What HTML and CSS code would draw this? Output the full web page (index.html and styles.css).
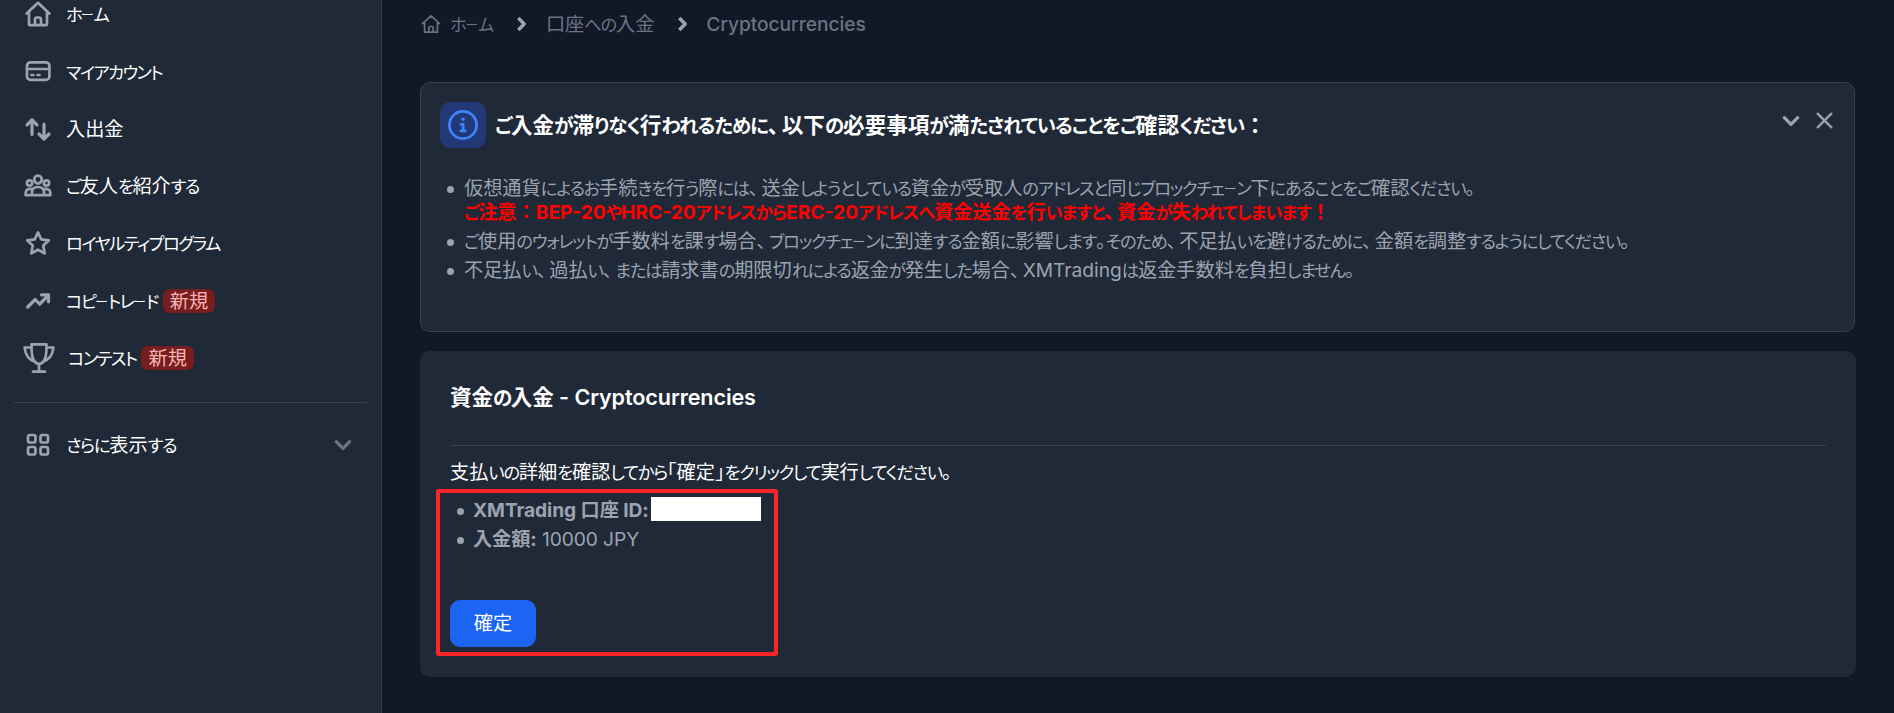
FILE: index.html
```html
<!DOCTYPE html>
<html lang="ja">
<head>
    <meta charset="UTF-8">
    <meta name="viewport" content="width=device-width, initial-scale=1.0">
    <title>資金の入金 - Cryptocurrencies</title>
    <link rel="stylesheet" href="styles.css">
</head>
<body>

<aside class="sidebar">
    <ul class="menu">
        <li class="menu-item">
            <svg class="icon" viewBox="0 0 28 28"><path d="M2.6 13.6 14 2.8l11.4 10.8M5 12v12.2q0 1 1 1h16q1 0 1-1V12M11 25v-5.500q0-2 2-2h2q2 0 2 2V25"/></svg>
            <span class="texto">ホーム</span>
        </li>
        <li class="menu-item">
            <svg class="icon" viewBox="0 0 28 28"><rect x="3" y="5.300" width="22.400" height="17.600" rx="3.500"/><path d="M3 12h22.400M7.500 18h2M13.500 18h2"/></svg>
            <span class="texto">マイアカウント</span>
        </li>
        <li class="menu-item">
            <svg class="icon" viewBox="0 0 28 28"><path class="thick" d="M8 19.500V5M3 9.800l5-5 5 5M20 9v14.500M15 19l5 5 5-5"/></svg>
            <span class="texto">入出金</span>
        </li>
        <li class="menu-item">
            <svg class="icon" viewBox="0 0 28 28"><circle cx="14" cy="7.500" r="3.800"/><circle cx="5.500" cy="11" r="2.600"/><circle cx="22.500" cy="11" r="2.600"/><path d="M8 23.200v-2.700q0-5.500 6-5.500t6 5.500v2.700M8 17q-6.300-.6-6.300 4v2.200h24.600V21q0-4.600-6.300-4"/></svg>
            <span class="texto">ご友人を紹介する</span>
        </li>
        <li class="menu-item">
            <svg class="icon" viewBox="0 0 28 28"><path d="m14 3.400 3.200 6.900 7.700 1-5.600 5.300 1.400 7.800-6.700-3.700-6.700 3.700 1.400-7.800-5.600-5.300 7.700-1z"/></svg>
            <span class="texto">ロイヤルティプログラム</span>
        </li>
        <li class="menu-item">
            <svg class="icon" viewBox="0 0 28 28"><path class="thick" d="m3.700 20 7.500-7.500 4.500 4.700 8-8.400M17.500 7.800h7v7"/></svg>
            <span class="texto">コピートレード</span>
            <span class="badge">新規</span>
        </li>
        <li class="menu-item menu-item-contest">
            <svg class="icon icon-cup" viewBox="0 0 32 32"><path d="M8.500 2.300h15q.5 19.500-7.500 19.500T8.500 2.300zM8.700 5.500H1.600q1 11.500 11 14.500M23.300 5.500h7.100q-1 11.500-11 14.500M16 22v7M10 29.700h12"/></svg>
            <span class="texto">コンテスト</span>
            <span class="badge">新規</span>
        </li>
    </ul>
    <div class="menu-more">
        <svg class="icon" viewBox="0 0 28 28"><rect x="4" y="4" width="7.500" height="7.500" rx="2"/><rect x="16.500" y="4" width="7.500" height="7.500" rx="2"/><rect x="4" y="16" width="7.500" height="7.500" rx="2"/><rect x="16.500" y="16" width="7.500" height="7.500" rx="2"/></svg>
        <span class="texto">さらに表示する</span>
        <svg class="chevron-down" viewBox="0 0 18 18"><path d="m3 6 6 6 6-6"/></svg>
    </div>
</aside>

<main class="content">
    <nav class="breadcrumb">
        <svg class="crumb-home" viewBox="0 0 28 28"><path d="M2 13.600 14 2.500l12 11.100M5 12v13.500h18V12M11 25v-5.500q0-2 2-2h2q2 0 2 2V25"/></svg>
        <span class="texto">ホーム</span>
        <svg class="crumb-sep" viewBox="0 0 12 16"><path d="m3 2.500 5.500 5.500L3 13.500"/></svg>
        <span class="texto">口座への入金</span>
        <svg class="crumb-sep" viewBox="0 0 12 16"><path d="m3 2.500 5.500 5.500L3 13.500"/></svg>
        <span class="crumb-last">Cryptocurrencies</span>
    </nav>

    <section class="notice">
        <div class="notice-header">
            <div class="notice-icon">
                <svg viewBox="0 0 32 32"><circle cx="16" cy="16" r="13.600"/><path d="M14 15.300h2.200v6.500M13.800 21.800h4.400"/><circle class="dot" cx="16" cy="10.300" r="1.700"/></svg>
            </div>
            <h2 class="texto">ご入金が滞りなく行われるために、以下の必要事項が満たされていることをご確認ください<span class="ancho">：</span></h2>
            <div class="notice-actions">
                <svg class="act-toggle" viewBox="0 0 18 18"><path d="m3 6 6 6 6-6"/></svg>
                <svg class="act-close" viewBox="0 0 18 18"><path d="m2.500 2.500 13 13m0-13-13 13"/></svg>
            </div>
        </div>
        <ul class="notice-list">
            <li class="texto">仮想通貨によるお手続きを行う際には、送金しようとしている資金が受取人のアドレスと同じブロックチェーン下にあることをご確認ください。<br>
                <strong class="warning">ご注意<span class="ancho">：</span>BEP-20やHRC-20アドレスからERC-20アドレスへ資金送金を行いますと、資金が失われてしまいます<span class="ancho">！</span></strong></li>
            <li class="texto">ご使用のウォレットが手数料を課す場合、ブロックチェーンに到達する金額に影響します。そのため、不足払いを避けるために、金額を調整するようにしてください。</li>
            <li class="texto">不足払い、過払い、または請求書の期限切れによる返金が発生した場合、XMTradingは返金手数料を負担しません。</li>
        </ul>
    </section>

    <section class="card">
        <h1 class="texto">資金の入金 - Cryptocurrencies</h1>
        <p class="lead texto">支払いの詳細を確認してから｢確定｣をクリックして実行してください。</p>
        <div class="confirm">
            <ul class="details">
                <li><strong>XMTrading 口座 ID:</strong><span class="masked"></span></li>
                <li><strong>入金額:</strong> 10000 JPY</li>
            </ul>
            <button class="btn">確定</button>
        </div>
    </section>
</main>

<script>
    // Envuelve los kana para mostrarlos más estrechos que los kanji
    function estrecharKana(nodo) {
        Array.from(nodo.childNodes).forEach(hijo => {
            if (hijo.nodeType === Node.TEXT_NODE) {
                const span = document.createElement('span');
                span.innerHTML = hijo.textContent
                    .replace(/[ぁ-ゖァ-ヺ]+/g, '<span class="kana">$&</span>')
                    .replace(/ー/g, '<span class="guion">ー</span>')
                    .replace(/、/g, '<span class="coma">、</span>');
                hijo.replaceWith(...span.childNodes);
            } else {
                estrecharKana(hijo);
            }
        });
    }

    document.querySelectorAll('.texto').forEach(estrecharKana);
</script>

</body>
</html>
```
FILE: styles.css
```css
* {
    box-sizing: border-box;
}
body {
    margin: 0;
    height: 713px;
    display: flex;
    overflow: hidden;
    background-color: #111827;
    color: #9ca3af;
    font-family: Inter, "Noto Sans CJK JP", sans-serif;
    font-size: 19.2px;
    font-feature-settings: "palt";
    line-height: 28.8px;
    white-space: nowrap;
}
ul {
    list-style: none;
    margin: 0;
    padding: 0;
}
svg {
    fill: none;
    stroke: currentColor;
    stroke-width: 2.4;
    stroke-linecap: round;
    stroke-linejoin: round;
    flex-shrink: 0;
    display: block;
}

/* Kana */
.kana {
    font-size: 0.9em;
    letter-spacing: -0.072em;
    line-height: 1;
}
h2 .kana,
.warning .kana {
    letter-spacing: -0.053em;
}
.guion {
    font-size: 0.66em;
    line-height: 1;
    vertical-align: 0.18em;
}
.coma {
    letter-spacing: 3px;
}
.ancho {
    font-feature-settings: normal;
}

/* Menu lateral */
.sidebar {
    width: 382px;
    flex-shrink: 0;
    height: 713px;
    padding: 0 14px;
    background-color: #1f2937;
    border-right: 1px solid #374151;
}
.menu {
    margin-top: -14.5px;
    padding-bottom: 15px;
    border-bottom: 1px solid #374151;
}
.menu-item,
.menu-more {
    display: flex;
    align-items: center;
    height: 57.3px;
    padding-left: 10px;
    color: white;
}
.menu .texto,
.menu-more .texto {
    padding-top: 1px;
}
.menu .kana {
    letter-spacing: -0.09em;
}
.menu-more {
    margin-top: 13.5px;
}
.icon {
    width: 28px;
    height: 28px;
    margin-right: 14px;
    color: #9ca3af;
    stroke-width: 2.7;
}
.icon .thick {
    stroke-width: 3.2;
}
.icon-cup {
    width: 32px;
    height: 32px;
    margin-right: 13px;
}
.menu-item-contest {
    padding-left: 9px;
}
.badge {
    height: 24px;
    line-height: 24px;
    margin-left: 5px;
    padding: 0 7px;
    border-radius: 7px;
    background-color: #771d1d;
    color: #f8b4b4;
}
.chevron-down {
    width: 20px;
    height: 20px;
    margin-left: auto;
    margin-right: 14px;
    color: #6b7280;
    stroke-width: 3;
}

/* Contenido */
.content {
    flex: 1;
    padding: 0 38px;
}
.breadcrumb {
    display: flex;
    align-items: center;
    height: 48px;
    color: #6b7280;
}
.crumb-home {
    width: 20px;
    height: 20px;
    margin-left: 1px;
    margin-right: 9px;
}
.crumb-sep {
    width: 13px;
    height: 18px;
    margin: 0 18px 0 22px;
    color: #9ca3af;
    stroke-width: 3.2;
    stroke-linecap: butt;
}
.crumb-last {
    margin-left: -1px;
    font-weight: 500;
    letter-spacing: -0.06px;
}
.notice {
    height: 250px;
    margin-top: 34px;
    margin-right: 1px;
    padding: 19px;
    border: 1px solid #374151;
    border-radius: 10px;
    background-color: #1f2937;
}
.notice-header {
    display: flex;
    align-items: center;
    height: 46px;
}
.notice-icon {
    width: 46px;
    height: 46px;
    padding: 7px;
    margin-right: 9px;
    border-radius: 10px;
    background-color: #233876;
    color: #3f83f8;
}
.notice-icon svg {
    stroke-width: 2.8;
}
.notice-icon .dot {
    fill: currentColor;
    stroke: none;
}
h1,
h2 {
    margin: 0;
    font-size: 21.6px;
    font-weight: 600;
    color: white;
}
.notice-actions {
    display: flex;
    align-items: center;
    gap: 14px;
    margin: -9px 1px 0 auto;
}
.notice-actions svg {
    width: 20px;
    height: 20px;
}
.notice-actions .act-toggle {
    stroke-width: 3;
}
.notice-actions .act-close {
    width: 19px;
    height: 19px;
    stroke-width: 2.2;
}
.notice-list {
    margin-top: 28px;
    padding-left: 24px;
    line-height: 24px;
}
.notice-list li,
.details li {
    position: relative;
    margin-bottom: 5px;
}
.notice-list li::before,
.details li::before {
    content: "";
    position: absolute;
    left: -17px;
    top: 10px;
    width: 7px;
    height: 7px;
    border-radius: 50%;
    background-color: #9ca3af;
}
.warning {
    color: red;
}
.card {
    height: 326px;
    margin-top: 19px;
    padding: 32px 30px 0;
    border-radius: 10px;
    background-color: #1f2937;
}
.card h1 {
    height: 63px;
    border-bottom: 1px solid #374151;
    letter-spacing: -0.1px;
}
.lead {
    margin: 12px 0 0;
    color: white;
}
.confirm {
    width: 342px;
    height: 167px;
    margin: 2px 0 0 -14px;
    padding: 5px 10px;
    border: 4px solid #ff2528;
    border-radius: 3px;
}
.details {
    padding-left: 23px;
    line-height: 24px;
    letter-spacing: -0.08px;
}
.details li::before {
    left: -16px;
}
.masked {
    display: inline-block;
    width: 110px;
    height: 24px;
    margin-left: 2px;
    margin-top: -1px;
    background-color: white;
    vertical-align: top;
}
.btn {
    display: block;
    width: 86px;
    height: 47px;
    margin-top: 49px;
    padding: 0;
    border: none;
    border-radius: 10px;
    background-color: #1c64f2;
    color: white;
    font: inherit;
}
```
